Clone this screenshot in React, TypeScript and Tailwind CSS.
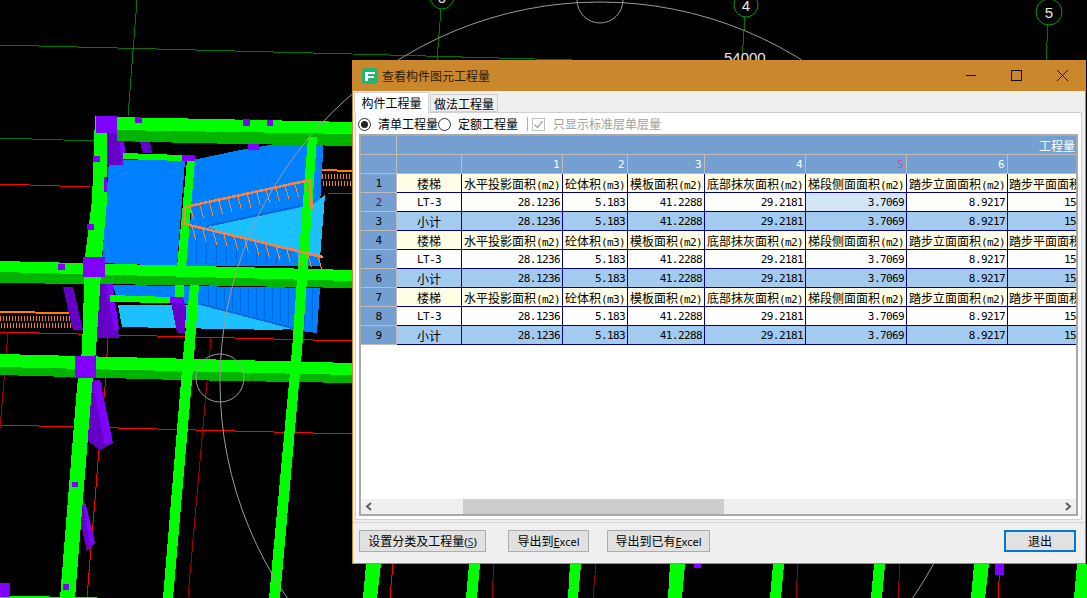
import React from 'react';

const monoCls = "font-['DejaVu_Sans_Mono',monospace] text-[11px] tracking-[-0.6px]";

const colWidths = ['w-[65px]', 'w-[101px]', 'w-[65px]', 'w-[77px]', 'w-[101px]', 'w-[101px]', 'w-[101px]', 'w-[70px]'];

const labels = [
  { name: '楼梯' },
  { name: '水平投影面积', unit: '(m2)' },
  { name: '砼体积', unit: '(m3)' },
  { name: '模板面积', unit: '(m2)' },
  { name: '底部抹灰面积', unit: '(m2)' },
  { name: '梯段侧面面积', unit: '(m2)' },
  { name: '踏步立面面积', unit: '(m2)' },
  { name: '踏步平面面积', unit: '(m2)' },
];

const values = ['28.1236', '5.183', '41.2288', '29.2181', '3.7069', '8.9217', '15'];

// background drawing
const beams = [
  { bright: '117,117 352,122 352,134 117,130', dark: '117,130 352,134 352,146 190,143 117,141' },
  { bright: '0,261 352,270 352,281 0,272', dark: '0,272 352,281 352,288 180,285 0,283' },
  { bright: '0,354 352,363 352,375 0,367', dark: '0,367 352,375 352,383 180,380 0,375' },
];

const columns = [
  '95,116 107,116 107,200 102,257 96,350 92,387 75,598 60,598 77,387 82,350 85,257 92,200',
  '187,160 195,160 186,267 177,267',
  '190,285 199,285 194,357 173,598 163,598 183,357',
  '308,137 317,137 308,265 302,350 280,598 269,598 292,350 298,265',
  '175,285 184,285 184,297 175,297',
  '366,564 381,564 377,598 363,598',
  '469,564 480,564 477,598 466,598',
  '570,564 581,564 578,598 568,598',
  '670,564 685,564 682,598 668,598',
  '773,564 784,564 781,598 770,598',
  '874,564 885,564 882,598 871,598',
  '974,564 989,564 985,598 971,598',
  '1077,564 1087,564 1087,598 1074,598',
];

const purpleDark = [
  '107,133 118,133 123,165 107,165',
  '140,142 150,142 152,153 143,153',
  '63,287 73,287 83,330 73,330',
  '100,280 112,280 119,338 97,338',
  '170,297 183,297 186,308 185,333 177,333',
  '88,380 100,380 113,443 100,450 88,441',
  '82,500 95,543 87,552 80,520',
];

const purpleBright = [
  '118,133 123,133 125,150 123,165',
  '105,280 112,280 119,330 114,330',
  '93,384 100,380 113,443 105,445',
  '82,500 86,505 95,543 90,545',
];

const purpleBlocks = [
  [96, 116, 21, 17], [135, 117, 7, 6], [243, 119, 7, 7], [267, 120, 6, 6], [93, 156, 7, 6],
  [87, 224, 7, 6], [182, 155, 13, 6], [248, 144, 11, 6], [83, 257, 22, 20], [75, 356, 21, 22],
  [72, 482, 6, 5], [63, 584, 6, 6], [0, 583, 10, 14], [58, 264, 7, 6], [170, 297, 13, 6],
  [995, 564, 9, 11], [694, 564, 7, 4], [104, 177, 3, 15],
];

const railTop = Array.from({ length: 13 }, (_, i) => 190 + i * 9.5);
const railBottom = Array.from({ length: 13 }, (_, i) => 192 + i * 10.5);

function Scene() {
  return (
    <svg width="1087" height="598" viewBox="0 0 1087 598" shapeRendering="crispEdges" className="absolute inset-0">
      {/* axis lines */}
      <g fill="none" stroke="#007800">
        <polyline points="0,45 352,54 572,60" />
        <polyline points="137,0 128,116" />
        <polyline points="0,138 95,141" />
        <polyline points="441,9 437,60" />
        <polyline points="745,17 742,60" />
        <polyline points="1048,25 1046,60" />
      </g>
      <g fill="none" stroke="#00a000" shapeRendering="auto">
        <ellipse cx="442" cy="-4" rx="12" ry="13" />
        <ellipse cx="746" cy="5" rx="12" ry="12" />
        <ellipse cx="1049" cy="12" rx="13" ry="13" />
      </g>
      <g fill="#e8e8e8" fontFamily="'Liberation Sans', sans-serif" shapeRendering="auto">
        <text x="442" y="3" fontSize="14" textAnchor="middle">3</text>
        <text x="746" y="11" fontSize="15" textAnchor="middle">4</text>
        <text x="1049" y="18" fontSize="15" textAnchor="middle">5</text>
        <text x="724" y="63" fontSize="15">54000</text>
      </g>
      {/* red grid */}
      <g fill="none" stroke="#ff0000">
        <polyline points="0,184 90,187" />
        <polyline points="328,193 352,194" />
        <polyline points="0,332 352,341" />
        <polyline points="0,425 352,434" />
        <polyline points="108,338 105,387 99,450 87,597" />
        <polyline points="393,564 390,598" />
        <polyline points="1000,564 998,598" />
      </g>
      <g fill="none" stroke="#a00000">
        <polyline points="8,332 0,428" />
        <polyline points="211,338 203,427 188,597" />
        <polyline points="494,564 492,598" />
        <polyline points="596,564 593,598" />
        <polyline points="798,564 796,598" />
        <polyline points="900,564 898,598" />
      </g>
      {/* hatched slabs */}
      <g stroke="#ff8000">
        <line x1="0" y1="312" x2="70" y2="313" strokeWidth="2" />
        <line x1="322" y1="170" x2="352" y2="171" strokeWidth="2" />
        {Array.from({ length: 24 }, (_, i) => (
          <g key={i}>
            <line x1={i * 3} y1={316} x2={i * 3 + 1} y2={321} />
            <line x1={i * 3 + 1} y1={323} x2={i * 3 + 2} y2={328} />
          </g>
        ))}
        {Array.from({ length: 10 }, (_, i) => (
          <g key={i}>
            <line x1={322 + i * 3} y1={174} x2={323 + i * 3} y2={179} />
            <line x1={323 + i * 3} y1={181} x2={324 + i * 3} y2={186} />
          </g>
        ))}
      </g>
      {/* stair body */}
      <polygon fill="#0080ff" points="109,160 185,160 177,266 102,263" />
      <polygon fill="#0080ff" points="193,160 240,150 300,140 324,136 320,205 210,232 190,232" />
      <polygon fill="#1cc0ff" points="207,227 312,205 325,195 320,258 247,240" />
      <polygon fill="#0080ff" points="187,226 247,240 320,258 320,266 186,266" />
      <polygon fill="#0080ff" points="112,285 320,288 317,333 293,330 200,305 118,300" />
      <polygon fill="#1cc0ff" points="118,305 200,305 293,328 280,330 122,327" />
      <polyline fill="none" stroke="#0068d8" strokeWidth="2" points="200,304 293,328" />
      <polyline fill="none" stroke="#0068d8" strokeWidth="2" points="207,226 300,206" />
      <g stroke="#0068d8">
        {Array.from({ length: 14 }, (_, i) => (
          <line key={i} x1={208 + i * 8} y1={289} x2={208 + i * 8} y2={305 + i * 1.8} />
        ))}
        {Array.from({ length: 9 }, (_, i) => (
          <line key={i} x1={196 + i * 10} y1={236 + i * 2.4} x2={196 + i * 10} y2={264} />
        ))}
      </g>
      {/* purple braces */}
      {purpleDark.map((p) => (
        <polygon key={p} fill="#6400c8" points={p} />
      ))}
      {purpleBright.map((p) => (
        <polygon key={p} fill="#8000ff" points={p} />
      ))}
      {/* frame */}
      {beams.map((b) => (
        <g key={b.bright}>
          <polygon fill="#00b400" points={b.dark} />
          <polygon fill="#00ff00" points={b.bright} />
        </g>
      ))}
      <polygon fill="#00ff00" points="123,153 182,155 182,161 123,159" />
      <polygon fill="#00ff00" points="110,295 170,297 170,303 110,302" />
      <polygon fill="#00ff00" points="0,598 0,596 97,597 97,598" />
      {columns.map((p) => (
        <polygon key={p} fill="#00ff00" points={p} />
      ))}
      {purpleBlocks.map(([x, y, w, h]) => (
        <rect key={`${x}-${y}`} x={x} y={y} width={w} height={h} fill="#8000ff" />
      ))}
      {/* railing */}
      <g fill="none" stroke="#ff7f3f" strokeWidth="2.5">
        <polyline points="185,207 310,180 312,210" />
        <polyline points="185,207 185,224 323,257" />
      </g>
      <g stroke="#ff8a30">
        {railTop.map((x, i) => (
          <line key={x} x1={x} y1={206 - i * 2.1} x2={x + 4} y2={220 - i * 2.1} />
        ))}
        {railBottom.map((x, i) => (
          <line key={x} x1={x} y1={226 + i * 2.5} x2={x + 4} y2={240 + i * 2.5} />
        ))}
      </g>
      {/* big arc */}
      <g fill="none" stroke="#9a9a9a" shapeRendering="auto">
        <circle cx="600" cy="382" r="380" />
        <circle cx="600" cy="0" r="23" />
        <circle cx="220" cy="378" r="24" />
      </g>
    </svg>
  );
}

function TableCell({ width, className, children }: { width: string; className: string; children?: React.ReactNode }) {
  return <div className={`${width} shrink-0 h-full overflow-hidden whitespace-nowrap ${className}`}>{children}</div>;
}

function RowHead({ n }: { n: number }) {
  return (
    <div className={`w-[36px] shrink-0 h-full bg-[#749fd0] border-r border-b border-[#bcbcbc] text-center ${monoCls} ${n === 2 ? 'text-[#5c0a6e]' : 'text-black'}`}>
      {n}
    </div>
  );
}

function LabelRow({ n }: { n: number }) {
  return (
    <div className="flex h-[19px] leading-[20px] text-black">
      <RowHead n={n} />
      {labels.map((l, i) => (
        <TableCell
          key={l.name}
          width={colWidths[i]}
          className={`bg-[#fffde3] border-b border-[#000080] ${i < 7 ? 'border-r text-center' : 'pl-[1px]'}`}
        >
          {l.name}
          {l.unit && <span className={monoCls}>{l.unit}</span>}
        </TableCell>
      ))}
    </div>
  );
}

function ValueRow({ n, name, subtotal, selected }: { n: number; name: string; subtotal?: boolean; selected?: boolean }) {
  const bg = subtotal ? 'bg-[#a3cbef]' : 'bg-white';
  return (
    <div className="flex h-[19px] leading-[20px] text-black">
      <RowHead n={n} />
      <TableCell width={colWidths[0]} className={`${bg} border-r border-b border-[#000080] text-center ${name === 'LT-3' ? monoCls : ''}`}>
        {name}
      </TableCell>
      {values.map((v, i) => (
        <TableCell
          key={v}
          width={colWidths[i + 1]}
          className={`${selected && i === 4 ? 'bg-[#d3e6f7]' : bg} border-b border-[#000080] text-right pr-[2px] ${i < 6 ? 'border-r' : ''} ${monoCls}`}
        >
          {v}
        </TableCell>
      ))}
    </div>
  );
}

function QuantityGrid() {
  return (
    <div className="mx-[3px] h-[382px] border-2 border-[#a8a8a8] flex flex-col text-[12px]">
      <div className="flex-1 overflow-hidden">
        <div className="flex h-[19px] bg-[#749fd0]">
          <div className="w-[36px] shrink-0 border-r border-b border-[#bcbcbc]" />
          <div className="flex-1 border-b border-[#bcbcbc] text-right text-white text-[12px] leading-[19px] pr-[1px]">工程量</div>
        </div>
        <div className={`flex h-[19px] leading-[20px] bg-[#749fd0] text-white ${monoCls}`}>
          <div className="w-[36px] shrink-0 border-r border-b border-[#bcbcbc]" />
          {colWidths.map((w, i) => (
            <TableCell key={w + i} width={w} className={`border-b border-[#bcbcbc] text-right pr-[3px] ${i < 7 ? 'border-r' : ''} ${i === 5 ? 'text-[#c850a8]' : ''}`}>
              {i > 0 && i < 7 ? i : ''}
            </TableCell>
          ))}
        </div>
        {[0, 1, 2].map((g) => (
          <React.Fragment key={g}>
            <LabelRow n={g * 3 + 1} />
            <ValueRow n={g * 3 + 2} name="LT-3" selected={g === 0} />
            <ValueRow n={g * 3 + 3} name="小计" subtotal />
          </React.Fragment>
        ))}
      </div>
      {/* horizontal scrollbar */}
      <div className="h-[15px] bg-[#efefef] flex items-center text-[#606060]">
        <svg width="16" height="15" viewBox="0 0 16 15" fill="none" stroke="currentColor" strokeWidth="2">
          <polyline points="10,4 6,7.5 10,11" />
        </svg>
        <div className="ml-[86px] w-[261px] h-full bg-[#cdcdcd]" />
        <svg width="16" height="15" viewBox="0 0 16 15" fill="none" stroke="currentColor" strokeWidth="2" className="ml-auto">
          <polyline points="6,4 10,7.5 6,11" />
        </svg>
      </div>
    </div>
  );
}

function FootButton({ width, active, children }: { width: string; active?: boolean; children: React.ReactNode }) {
  return (
    <button className={`${width} h-[22px] bg-[#e1e1e1] text-black text-[12px] leading-none flex items-center justify-center ${active ? 'border-2 border-[#0078d7]' : 'border border-[#adadad]'}`}>
      {children}
    </button>
  );
}

function Dialog() {
  return (
    <div className="absolute left-[352px] top-[60px] w-[734px] h-[504px] flex flex-col border-x border-b border-[#cb872c] font-['Noto_Sans_CJK_SC',sans-serif] text-[12px] text-black">
      {/* title bar */}
      <div className="h-[31px] shrink-0 bg-[#cb872c] flex items-center">
        <svg width="16" height="16" viewBox="0 0 16 16" className="ml-[9px]">
          <rect width="16" height="16" rx="3" fill="#22b573" />
          <path d="M3 4h10v2H6v2h6v2H6v3H3z" fill="#fff" />
        </svg>
        <span className="ml-[4px] text-[12px] text-[#2b1c08]">查看构件图元工程量</span>
        <svg width="105" height="31" viewBox="0 0 105 31" fill="none" stroke="#111" shapeRendering="crispEdges" className="ml-auto mr-[14px]">
          <line x1="0" y1="15.5" x2="10" y2="15.5" />
          <rect x="45.5" y="10.5" width="10" height="10" />
          <line x1="91" y1="10" x2="102" y2="21" shapeRendering="auto" />
          <line x1="102" y1="10" x2="91" y2="21" shapeRendering="auto" />
        </svg>
      </div>
      {/* body */}
      <div className="flex-1 bg-[#efefef] flex flex-col">
        <div className="h-[21px] shrink-0 flex items-end pl-[1px]">
          <div className="w-[75px] h-[21px] bg-white border border-b-0 border-[#d0d0d0] text-center leading-[19px] relative z-10 -mb-[1px]">构件工程量</div>
          <div className="w-[68px] h-[18px] ml-[1px] bg-[#f0f0f0] border border-[#d0d0d0] text-center leading-[18px]">做法工程量</div>
        </div>
        <div className="ml-[2px] mr-[3px] h-[408px] shrink-0 bg-white border border-[#d0d0d0] flex flex-col">
          <div className="h-[21px] shrink-0 flex items-center pl-[2px] pt-[1px]">
            <span className="w-[13px] h-[13px] rounded-full border border-[#333] flex items-center justify-center">
              <span className="w-[7px] h-[7px] rounded-full bg-[#222]" />
            </span>
            <span className="ml-[7px]">清单工程量</span>
            <span className="w-[13px] h-[13px] rounded-full border border-[#333]" />
            <span className="ml-[7px]">定额工程量</span>
            <span className="ml-[9px] w-px h-[14px] bg-[#b0b0b0]" />
            <span className="ml-[4px] w-[13px] h-[13px] border border-[#c0c0c0] flex items-center justify-center">
              <svg width="11" height="11" viewBox="0 0 11 11" fill="none" stroke="#b0b0b0" strokeWidth="1.5">
                <polyline points="1.5,5.5 4.5,8.5 9.5,2" />
              </svg>
            </span>
            <span className="ml-[8px] text-[#a0a0a0]">只显示标准层单层量</span>
          </div>
          <QuantityGrid />
        </div>
        {/* footer */}
        <div className="mt-[2px] flex-1 border-t border-[#d4d4d4] flex items-start pt-[7px] pl-[6px] pr-[9px]">
          <FootButton width="w-[127px]">
            设置分类及工程量<span className="font-['Noto_Sans',sans-serif] text-[11px]">(<span className="underline text-[#1a3f70]">S</span>)</span>
          </FootButton>
          <FootButton width="w-[81px] ml-[22px]">
            导出到<span className="font-['Noto_Sans',sans-serif] text-[11px]"><span className="underline">E</span>xcel</span>
          </FootButton>
          <FootButton width="w-[103px] ml-[18px]">
            导出到已有<span className="font-['Noto_Sans',sans-serif] text-[11px]"><span className="underline">E</span>xcel</span>
          </FootButton>
          <FootButton width="w-[72px] ml-auto" active>
            退出
          </FootButton>
        </div>
      </div>
    </div>
  );
}

export default function App() {
  return (
    <div className="relative w-[1087px] h-[598px] bg-black overflow-hidden">
      <Scene />
      <Dialog />
    </div>
  );
}
